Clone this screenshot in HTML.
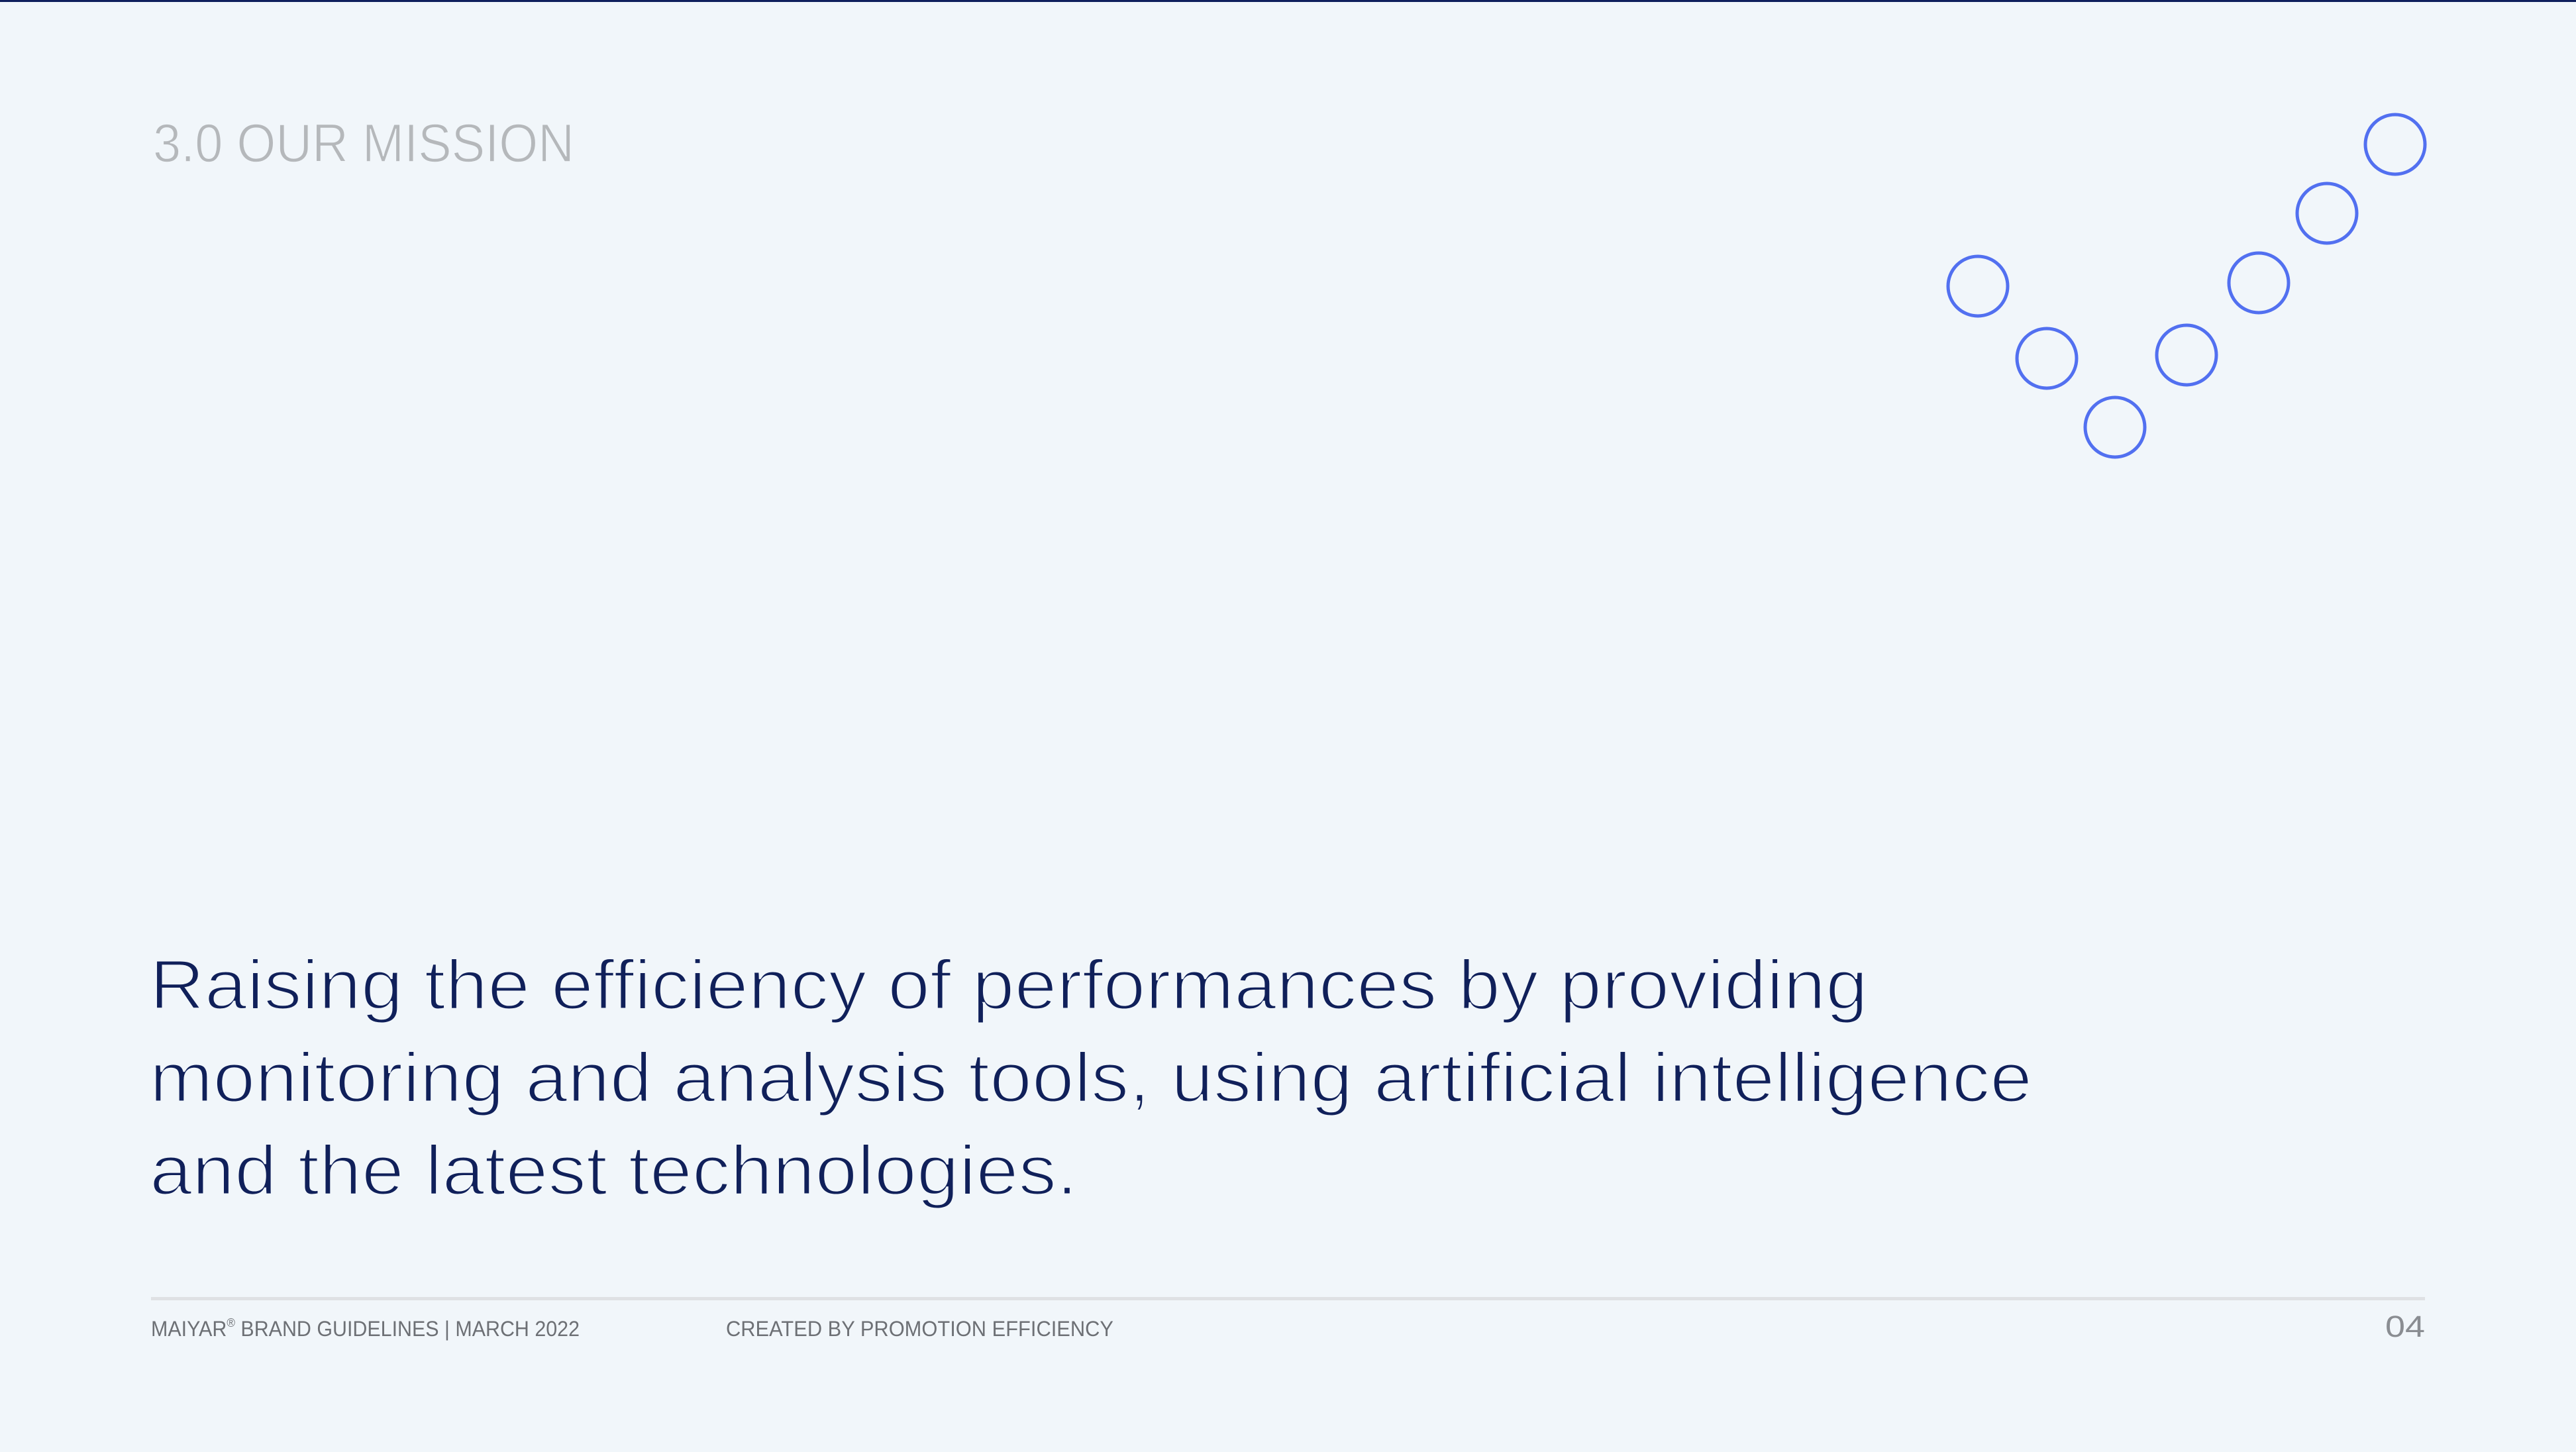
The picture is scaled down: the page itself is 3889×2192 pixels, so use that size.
<!DOCTYPE html>
<html><head><meta charset="utf-8"><style>
html,body{margin:0;padding:0;background:#f1f6fa;}
svg{display:block}
</style></head><body>
<svg width="3889" height="2192" viewBox="0 0 3889 2192" xmlns="http://www.w3.org/2000/svg">
<rect width="3889" height="2192" fill="#f1f6fa"/>
<rect x="0" y="0" width="3889" height="3" fill="#0f1f5c"/>
<text x="231" y="244" font-family="Liberation Sans, sans-serif" font-size="82" fill="#b5b8bb" stroke="#f1f6fa" stroke-width="1.5" textLength="636" lengthAdjust="spacingAndGlyphs">3.0 OUR MISSION</text>
<g fill="none" stroke="#5270f0" stroke-width="5">
<circle cx="2986" cy="432" r="45"/>
<circle cx="3090" cy="541" r="45"/>
<circle cx="3193" cy="645" r="45"/>
<circle cx="3301" cy="536" r="45"/>
<circle cx="3410" cy="427" r="45"/>
<circle cx="3513" cy="322" r="45"/>
<circle cx="3616" cy="218" r="45"/>
</g>
<g font-family="Liberation Sans, sans-serif" font-size="106" fill="#10205a" stroke="#f1f6fa" stroke-width="3">
<text x="226" y="1523" textLength="2594" lengthAdjust="spacingAndGlyphs">Raising the efficiency of performances by providing</text>
<text x="226" y="1663" textLength="2842" lengthAdjust="spacingAndGlyphs">monitoring and analysis tools, using artificial intelligence</text>
<text x="226" y="1803" textLength="1401" lengthAdjust="spacingAndGlyphs">and the latest technologies.</text>
</g>
<rect x="228" y="1958" width="3433" height="5" fill="#dfe1e4"/>
<g font-family="Liberation Sans, sans-serif" fill="#6d7075">
<text x="228" y="2017" font-size="32" textLength="647" lengthAdjust="spacingAndGlyphs">MAIYAR<tspan font-size="18" dy="-14">®</tspan><tspan dy="14"> BRAND GUIDELINES | MARCH 2022</tspan></text>
<text x="1096" y="2017" font-size="32" textLength="585" lengthAdjust="spacingAndGlyphs">CREATED BY PROMOTION EFFICIENCY</text>
<text x="3601" y="2018" font-size="45" textLength="60" lengthAdjust="spacingAndGlyphs" fill="#8a8d92">04</text>
</g>
</svg>
</body></html>
